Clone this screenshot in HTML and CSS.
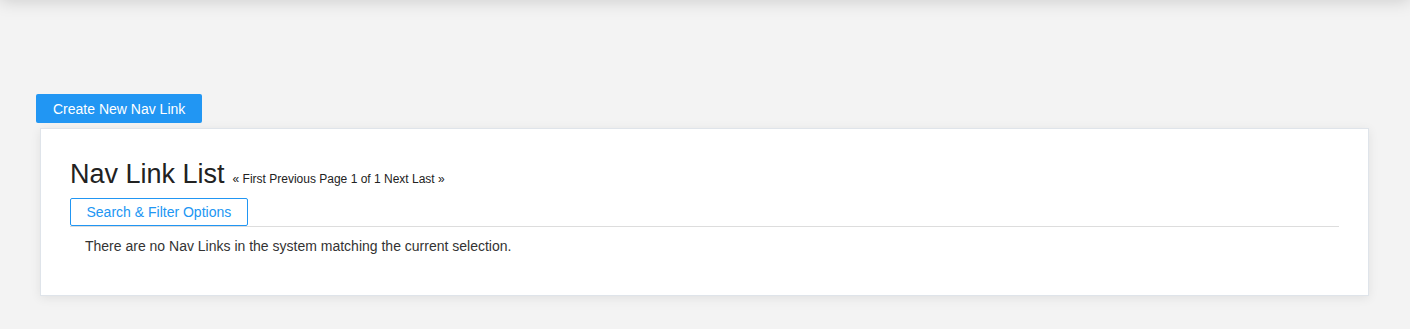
FILE: index.html
```html
<!DOCTYPE html>
<html>
<head>
<meta charset="utf-8">
<link rel="stylesheet" href="styles.css">
</head>
<body>
<div class="topbar"></div>
<main class="page">
  <div class="actions">
    <button class="btn-primary">Create New Nav Link</button>
  </div>
  <section class="card">
    <div class="card-head">
      <h2 class="title">Nav Link List</h2>
      <span class="pager">« First Previous Page 1 of 1 Next Last »</span>
    </div>
    <div class="tabs">
      <button class="btn-outline">Search &amp; Filter Options</button>
    </div>
    <p class="empty">There are no Nav Links in the system matching the current selection.</p>
  </section>
</main>
</body>
</html>
```
FILE: styles.css
```css
* { box-sizing: border-box; }
html, body { margin: 0; padding: 0; }
body {
  background: #f3f3f3;
  font-family: "Liberation Sans", Arial, sans-serif;
  color: #222;
  height: 329px;
  overflow: hidden;
}
.topbar {
  position: fixed;
  top: -20px;
  left: 0;
  right: 0;
  height: 20px;
  box-shadow: 0 0 18px rgba(0, 0, 0, 0.18);
  background: #f3f3f3;
}
.page {
  padding: 94px 41px 0 36px;
}
.actions {
  display: flex;
  margin-bottom: 5px;
}
.btn-primary {
  background: #2196f3;
  color: #fff;
  border: none;
  border-radius: 2px;
  font-family: inherit;
  font-size: 14px;
  height: 29px;
  padding: 0 17px;
  cursor: pointer;
}
.card {
  margin-left: 4px;
  background: #fff;
  border: 1px solid #dfe4ea;
  box-shadow: 0 2px 10px rgba(0, 0, 0, 0.08);
  padding: 29px 29px 40px 29px;
}
.card-head {
  display: flex;
  align-items: baseline;
  gap: 8px;
}
.title {
  margin: 0;
  font-weight: normal;
  font-size: 27px;
  line-height: 32px;
  color: #222;
}
.pager {
  font-size: 12px;
  color: #222;
}
.tabs {
  margin-top: 8px;
  border-bottom: 1px solid #dddddd;
  display: flex;
}
.btn-outline {
  background: #fff;
  color: #2196f3;
  border: 1px solid #2196f3;
  border-radius: 2px;
  font-family: inherit;
  font-size: 14px;
  height: 28px;
  padding: 0 15.5px;
  margin-bottom: 0;
}
.empty {
  margin: 10px 0 0 15px;
  font-size: 14px;
  line-height: 18px;
  color: #333;
}
```
